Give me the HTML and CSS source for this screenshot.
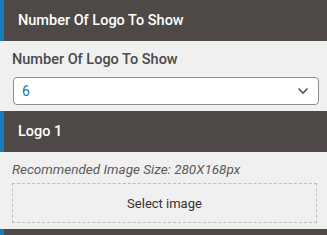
FILE: index.html
```html
<!DOCTYPE html>
<html>
<head>
<meta charset="utf-8">
<link rel="stylesheet" href="styles.css">
</head>
<body>
<div class="panel">
  <div class="head"><span>Number Of Logo To Show</span></div>
  <div class="body body-select">
    <label class="label">Number Of Logo To Show</label>
    <div class="select">
      <span class="value">6</span>
      <svg class="chev" width="12" height="8" viewBox="0 0 12 8"><path d="M1.5 1.5 L6 6 L10.5 1.5" fill="none" stroke="#555" stroke-width="1.6"/></svg>
    </div>
  </div>
  <div class="head"><span>Logo 1</span></div>
  <div class="body body-image">
    <p class="hint">Recommended Image Size: 280X168px</p>
    <div class="drop">Select image</div>
  </div>
  <div class="head head-last"></div>
</div>
</body>
</html>
```
FILE: styles.css
```css
* { box-sizing: border-box; }
body {
  margin: 0;
  background: #f0f0f0;
  font-family: Roboto, "Liberation Sans", sans-serif;
}
.panel {
  display: flex;
  flex-direction: column;
  width: 327px;
  height: 235px;
  overflow: hidden;
}
.head {
  height: 41px;
  background: #4e4947;
  border-left: 4px solid #1a7bb9;
  display: flex;
  align-items: center;
  padding-left: 14px;
  color: #fff;
  font-size: 14.5px;
  font-weight: 500;
  flex-shrink: 0;
}
.head-last {
  height: 6px;
}
.body {
  background: #f0f0f0;
  padding: 0 8px 0 12px;
  flex-shrink: 0;
}
.body-select {
  height: 70px;
  padding-top: 10px;
}
.label {
  display: block;
  font-size: 14.5px;
  font-weight: 500;
  color: #4a4a4a;
  line-height: 18px;
  margin-bottom: 8px;
}
.select {
  margin-left: 1px;
  height: 28px;
  background: #fff;
  border: 1px solid #8c8f94;
  border-radius: 4px;
  display: flex;
  align-items: center;
  justify-content: space-between;
  padding: 0 8px 0 8px;
}
.value {
  color: #2271b1;
  font-size: 14px;
}
.chev { margin-right: 1px; }
.body-image {
  height: 77px;
  padding-top: 9px;
  padding-right: 10px;
}
.hint {
  margin: 0 0 6px 0;
  font-style: italic;
  font-size: 13.5px;
  color: #5a5a5a;
  line-height: 16px;
}
.drop {
  height: 40px;
  border: 1px dashed #bdbdbd;
  display: flex;
  align-items: center;
  justify-content: center;
  font-size: 13px;
  color: #333;
}
```
